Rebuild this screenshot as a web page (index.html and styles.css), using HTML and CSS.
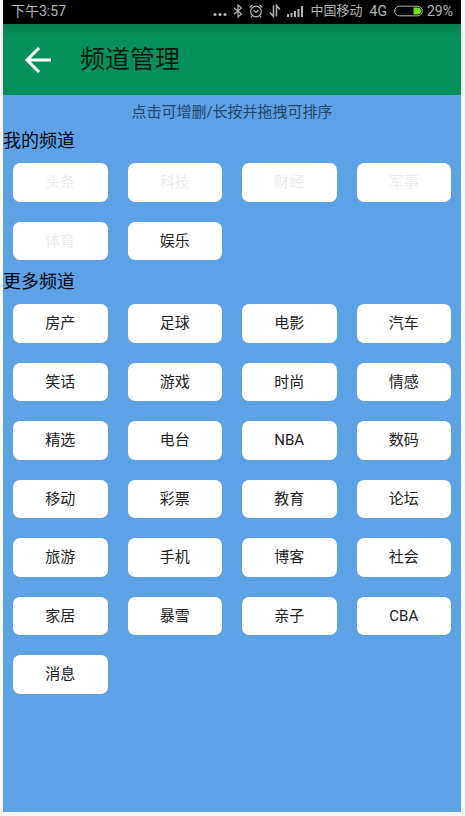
FILE: index.html
```html
<!DOCTYPE html>
<html lang="zh-CN">
<head>
<meta charset="utf-8">
<meta name="viewport" content="width=device-width, initial-scale=1">
<title>频道管理</title>
<link rel="stylesheet" href="styles.css">
</head>
<body>
<div class="screen">
  <div class="status">
    <span class="clock">下午3:57</span>
    <div class="indicators">
      <svg width="14" height="16" viewBox="0 0 14 16" fill="currentColor"><circle cx="2" cy="11.500" r="1.600"/><circle cx="7" cy="11.500" r="1.600"/><circle cx="12" cy="11.500" r="1.600"/></svg>
      <svg width="10" height="16" viewBox="0 0 10 16" fill="none" stroke="currentColor" stroke-width="1.200"><path d="M1 4.800 8.500 11 5 14V2l3.500 3L1 11.200"/></svg>
      <svg width="14" height="16" viewBox="0 0 14 16" fill="none" stroke="currentColor" stroke-width="1.200"><circle cx="7" cy="8.500" r="5.300"/><path d="M4.500 7 7 9.200 9.500 7M.7 4.500 3.500 2M13.300 4.500 10.500 2M3 13 1.800 14.500M11 13l1.200 1.500"/></svg>
      <svg width="12" height="16" viewBox="0 0 12 16" fill="none" stroke="currentColor" stroke-width="1.500"><path d="M4.500 2.500v11L1 9.500M7.500 13.500v-11L11 6.500"/></svg>
      <svg width="17" height="16" viewBox="0 0 17 16" fill="currentColor"><path d="M0 11h2v3H0zM3.500 10h2v4h-2zM7 8h2v6H7zM10.500 6h2v8h-2zM14 3h2v11h-2z"/></svg>
    </div>
    <span class="carrier">中国移动</span>
    <span class="network">4G</span>
    <div class="power">
      <svg width="29" height="16" viewBox="0 0 29 16"><rect x=".7" y="3.200" width="27.600" height="9.600" rx="4.800" fill="none" stroke="currentColor"/><path class="charge" d="M19.500 4.500h4a3.500 3.500 0 0 1 0 7h-4z"/></svg>
      <span>29%</span>
    </div>
  </div>
  <header class="toolbar">
    <button class="back" type="button" aria-label="返回"><svg width="28" height="28" viewBox="0 0 28 28" fill="none" stroke="currentColor" stroke-width="3"><path d="M27 14H3M15 2 3 14l12 12"/></svg></button>
    <h1>频道管理</h1>
  </header>
  <main>
    <p class="hint">点击可增删/长按并拖拽可排序</p>
    <h2>我的频道</h2>
    <div class="channels">
      <button type="button" disabled>头条</button>
      <button type="button" disabled>科技</button>
      <button type="button" disabled>财经</button>
      <button type="button" disabled>军事</button>
      <button type="button" disabled>体育</button>
      <button type="button">娱乐</button>
    </div>
    <h2>更多频道</h2>
    <div class="channels">
      <button type="button">房产</button>
      <button type="button">足球</button>
      <button type="button">电影</button>
      <button type="button">汽车</button>
      <button type="button">笑话</button>
      <button type="button">游戏</button>
      <button type="button">时尚</button>
      <button type="button">情感</button>
      <button type="button">精选</button>
      <button type="button">电台</button>
      <button type="button">NBA</button>
      <button type="button">数码</button>
      <button type="button">移动</button>
      <button type="button">彩票</button>
      <button type="button">教育</button>
      <button type="button">论坛</button>
      <button type="button">旅游</button>
      <button type="button">手机</button>
      <button type="button">博客</button>
      <button type="button">社会</button>
      <button type="button">家居</button>
      <button type="button">暴雪</button>
      <button type="button">亲子</button>
      <button type="button">CBA</button>
      <button type="button">消息</button>
    </div>
  </main>
</div>
</body>
</html>
```

FILE: styles.css
```css
* {
  box-sizing: border-box;
}

body {
  margin: 0;
  padding: 0 4px 4px 3px;
  min-height: 100vh;
  display: flex;
  background: #f4f7f8;
  color: #000;
  font-family: Roboto, "Noto Sans CJK SC", sans-serif;
}

.screen {
  flex: 1;
  min-width: 0;
  background: #5da2e5;
}

.status {
  display: flex;
  align-items: center;
  gap: 7px;
  height: 24px;
  padding: 0 8px 2px;
  background: #000;
  color: #b4b4b4;
  font-size: 14px;
  line-height: 22px;
  white-space: nowrap;
}

.clock {
  margin-right: auto;
}

.carrier {
  font-size: 13px;
}

.indicators {
  display: flex;
  gap: 6px;
}

.power {
  display: flex;
  align-items: center;
  gap: 4px;
}

.charge {
  fill: #6fe01c;
}

.toolbar {
  display: flex;
  align-items: center;
  gap: 28px;
  height: 71px;
  padding: 0 21px;
  background: linear-gradient(#05804f, #06915c 14px);
}

.back {
  display: flex;
  padding: 0;
  border: 0;
  background: none;
  color: #fff;
}

h1,
h2,
.hint {
  margin: 0;
  font-weight: 400;
}

h1 {
  font-size: 25px;
  line-height: 36px;
  color: #021c12;
}

.hint {
  padding: 5px;
  color: #23476c;
  font-size: 15px;
  line-height: 24px;
  text-align: center;
}

h2 {
  color: #000510;
  font-size: 18px;
  line-height: 24px;
}

.channels {
  display: grid;
  grid-template-columns: repeat(4, minmax(0, 1fr));
  gap: 20px;
  padding: 10px;
}

.channels button {
  aspect-ratio: 27 / 11;
  padding: 0;
  border: 0;
  border-radius: 7px;
  background: #fff;
  color: #222;
  font-family: inherit;
  font-size: 15px;
  line-height: 22px;
}

.channels button:disabled {
  color: #ececec;
}
```
